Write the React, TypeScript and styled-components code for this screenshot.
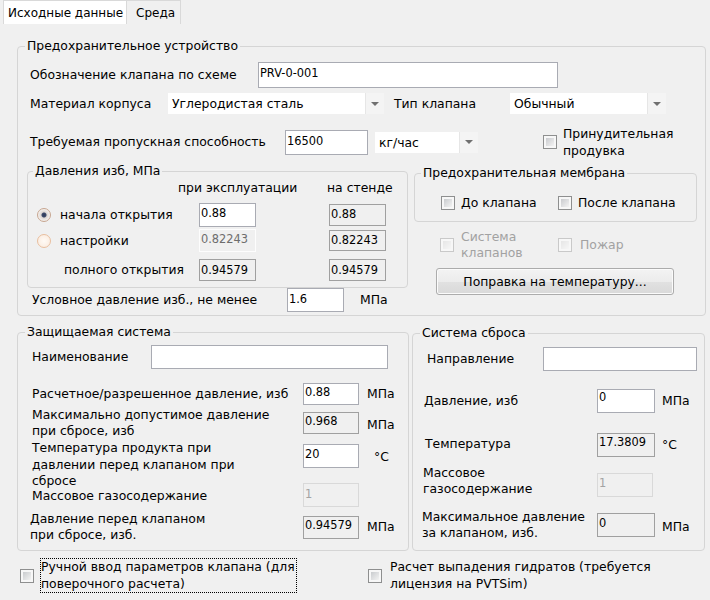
import React from 'react';
import styled, { createGlobalStyle, css } from 'styled-components';

const GlobalStyle = createGlobalStyle`
  html, body {
    margin: 0;
    padding: 0;
    background: #f0f0f0;
  }
`;

const Screen = styled.div`
  width: 710px;
  height: 600px;
  overflow: hidden;
  background: #f0f0f0;
  font-family: 'DejaVu Sans', Verdana, sans-serif;
  font-size: 12.4px;
  line-height: 16px;
  color: #000;
  display: flex;
  flex-direction: column;
`;

const TabStrip = styled.div`
  display: flex;
  height: 24px;
  padding-left: 3px;
  flex: none;
`;

const Tab = styled.div<{ $active?: boolean }>`
  box-sizing: border-box;
  height: 24px;
  font-size: 12px;
  line-height: 16px;
  padding: 4px 3px 0 4px;
  border: 1px solid #d9d9d9;
  border-bottom: none;
  background: #fff;
  white-space: nowrap;

  ${({ $active }) =>
    !$active &&
    css`
      background: #f0f0f0;
      border-left: none;
      padding: 4px 5px 0 9px;
    `}
`;

const Group = styled.fieldset<{ $w: number; $h: number; $mt?: number; $ml?: number }>`
  box-sizing: border-box;
  flex: none;
  width: ${({ $w }) => $w}px;
  height: ${({ $h }) => $h}px;
  margin: ${({ $mt }) => $mt ?? 0}px 0 0 ${({ $ml }) => $ml ?? 0}px;
  padding: 0;
  min-width: 0;
  border: 1px solid #d5d5d5;
  border-radius: 4px;
`;

const Legend = styled.legend<{ $ml: number }>`
  margin-left: ${({ $ml }) => $ml}px;
  padding: 0 2px;
  line-height: 16px;
  white-space: nowrap;
`;

const GroupBody = styled.div<{ $pl?: number }>`
  display: flex;
  flex-direction: column;
  padding-left: ${({ $pl }) => $pl ?? 0}px;
`;

const Split = styled.div<{ $mt?: number; $gap: number; $pl?: number }>`
  display: flex;
  align-items: flex-start;
  flex: none;
  gap: ${({ $gap }) => $gap}px;
  margin-top: ${({ $mt }) => $mt ?? 0}px;
  padding-left: ${({ $pl }) => $pl ?? 0}px;
`;

const Column = styled.div<{ $w: number }>`
  display: flex;
  flex-direction: column;
  flex: none;
  width: ${({ $w }) => $w}px;
`;

const Row = styled.div<{ $mt?: number; $h: number; $pl?: number; $top?: boolean }>`
  display: flex;
  flex: none;
  align-items: ${({ $top }) => ($top ? 'flex-start' : 'center')};
  height: ${({ $h }) => $h}px;
  margin-top: ${({ $mt }) => $mt ?? 0}px;
  padding-left: ${({ $pl }) => $pl ?? 0}px;
`;

const Label = styled.div<{ $w?: number; $ml?: number; $mt?: number; $lh?: number; $off?: boolean }>`
  flex: none;
  ${({ $w }) => $w !== undefined && css`width: ${$w}px;`}
  margin: ${({ $mt }) => $mt ?? 0}px 0 0 ${({ $ml }) => $ml ?? 0}px;
  line-height: ${({ $lh }) => $lh ?? 16}px;
  color: ${({ $off }) => ($off ? '#a2a2a2' : '#000')};
  white-space: nowrap;
`;

const Unit = styled(Label)``;

type FieldKind = 'edit' | 'readonly' | 'locked' | 'off';

const fieldKinds: Record<FieldKind, ReturnType<typeof css>> = {
  edit: css`
    background: #fff;
    border: 1px solid #a9abb3;
    color: #000;
  `,
  readonly: css`
    background: transparent;
    border: 1px solid #a0a0a0;
    color: #000;
  `,
  locked: css`
    background: #f0f0f0;
    border: 1px solid #fdfdfd;
    color: #6d6d6d;
  `,
  off: css`
    background: #f0f0f0;
    border: 1px solid #d9d9d9;
    color: #a3a3a3;
  `,
};

const Field = styled.div<{
  $w: number;
  $h: number;
  $kind?: FieldKind;
  $pt?: number;
  $mt?: number;
  $ml?: number;
}>`
  box-sizing: border-box;
  flex: none;
  width: ${({ $w }) => $w}px;
  height: ${({ $h }) => $h}px;
  margin: ${({ $mt }) => $mt ?? 0}px 0 0 ${({ $ml }) => $ml ?? 0}px;
  padding: ${({ $pt }) => $pt ?? 2}px 1px 0;
  font-size: 11.4px;
  line-height: 14px;
  white-space: nowrap;
  overflow: hidden;
  ${({ $kind }) => fieldKinds[$kind ?? 'edit']}
`;

const Combo = styled.div<{ $w: number; $ml?: number }>`
  box-sizing: border-box;
  flex: none;
  display: flex;
  width: ${({ $w }) => $w}px;
  height: 21px;
  margin-left: ${({ $ml }) => $ml ?? 0}px;
  background: #fff;
`;

const ComboText = styled.div`
  flex: 1;
  padding-left: 4px;
  line-height: 21px;
  white-space: nowrap;
  overflow: hidden;
`;

const ComboArrow = styled.div`
  width: 18px;
  flex: none;
  background: #f4f4f4;
  border-left: 1px solid #e6e6e6;
  display: flex;
  align-items: center;
  justify-content: center;

  &::after {
    content: '';
    border-left: 4px solid transparent;
    border-right: 4px solid transparent;
    border-top: 4px solid #707070;
  }
`;

const Check = styled.span<{ $off?: boolean; $ml?: number }>`
  box-sizing: border-box;
  flex: none;
  width: 14px;
  height: 14px;
  padding: 2px;
  margin-left: ${({ $ml }) => $ml ?? 0}px;
  border: 1px solid ${({ $off }) => ($off ? '#c9c9c9' : '#8e8f8f')};
  background: ${({ $off }) =>
    $off
      ? 'linear-gradient(135deg, #e6e6e6, #f6f6f6) content-box, #f7f7f7'
      : 'linear-gradient(135deg, #c9cbce, #f3f3f3) content-box, #f7f7f7'};
`;

const Radio = styled.span<{ $on?: boolean; $ml?: number }>`
  box-sizing: border-box;
  flex: none;
  width: 14px;
  height: 14px;
  margin-left: ${({ $ml }) => $ml ?? 0}px;
  border-radius: 50%;
  border: 1px solid ${({ $on }) => ($on ? '#c7a690' : '#e9bf9f')};
  background: ${({ $on }) =>
    $on
      ? 'radial-gradient(circle, #2f3b5a 0, #3d4a6a 2px, #dcd6d2 3px, #f6f2ef 6px)'
      : 'radial-gradient(circle, #fffaf5 0, #fbeee3 6px)'};
`;

const PushButton = styled.div`
  box-sizing: border-box;
  flex: none;
  width: 238px;
  height: 27px;
  margin: 7px 0 0 22px;
  border: 1px solid #acacac;
  border-radius: 3px;
  background: linear-gradient(#f3f3f3, #ececec 50%, #e1e1e1 51%, #d9d9d9);
  box-shadow: inset 0 0 0 1px #fbfbfb;
  display: flex;
  align-items: center;
  justify-content: center;
  white-space: nowrap;
`;

const FocusLabel = styled.div<{ $w: number; $ml: number }>`
  box-sizing: border-box;
  flex: none;
  width: ${({ $w }) => $w}px;
  height: 35px;
  margin-left: ${({ $ml }) => $ml}px;
  padding-left: 0;
  border: 1px dotted #000;
  line-height: 16.5px;
  white-space: nowrap;
`;

const App = () => (
  <>
    <GlobalStyle />
    <Screen>
      <TabStrip>
        <Tab $active>Исходные данные</Tab>
        <Tab>Среда</Tab>
      </TabStrip>

      <Group $w={689} $h={278} $mt={14} $ml={17}>
        <Legend $ml={7}>Предохранительное устройство</Legend>
        <GroupBody $pl={9}>
          <Row $mt={8} $h={26} $pl={3}>
            <Label $w={228}>Обозначение клапана по схеме</Label>
            <Field $w={300} $h={26} $pt={3}>
              PRV-0-001
            </Field>
          </Row>

          <Row $mt={5} $h={21} $pl={3}>
            <Label $w={138}>Материал корпуса</Label>
            <Combo $w={216}>
              <ComboText>Углеродистая сталь</ComboText>
              <ComboArrow />
            </Combo>
            <Label $w={116} $ml={10}>
              Тип клапана
            </Label>
            <Combo $w={156}>
              <ComboText>Обычный</ComboText>
              <ComboArrow />
            </Combo>
          </Row>

          <Row $mt={11} $h={34} $pl={3}>
            <Label $w={255}>Требуемая пропускная способность</Label>
            <Field $w={83} $h={25} $pt={3}>
              16500
            </Field>
            <Combo $w={103} $ml={7}>
              <ComboText>кг/час</ComboText>
              <ComboArrow />
            </Combo>
            <Check $ml={65} />
            <Label $ml={6} $lh={17}>
              Принудительная
              <br />
              продувка
            </Label>
          </Row>

          <Split $mt={4} $gap={6}>
            <Column $w={381}>
              <Group $w={381} $h={125}>
                <Legend $ml={5}>Давления изб, МПа</Legend>
                <GroupBody>
                  <Row $mt={1} $h={16}>
                    <Label $w={149} $ml={150}>
                      при эксплуатации
                    </Label>
                    <Label>на стенде</Label>
                  </Row>
                  <Row $mt={7} $h={24}>
                    <Radio $on $ml={9} />
                    <Label $w={139} $ml={9}>
                      начала открытия
                    </Label>
                    <Field $w={57} $h={24}>
                      0.88
                    </Field>
                    <Field $w={57} $h={22} $kind="readonly" $ml={73}>
                      0.88
                    </Field>
                  </Row>
                  <Row $mt={2} $h={23}>
                    <Radio $ml={9} />
                    <Label $w={139} $ml={9}>
                      настройки
                    </Label>
                    <Field $w={57} $h={23} $kind="locked">
                      0.82243
                    </Field>
                    <Field $w={57} $h={21} $kind="readonly" $ml={73}>
                      0.82243
                    </Field>
                  </Row>
                  <Row $mt={7} $h={22}>
                    <Label $w={135} $ml={36}>
                      полного открытия
                    </Label>
                    <Field $w={57} $h={22} $kind="readonly" $pt={3}>
                      0.94579
                    </Field>
                    <Field $w={57} $h={22} $kind="readonly" $ml={73} $pt={3}>
                      0.94579
                    </Field>
                  </Row>
                </GroupBody>
              </Group>
              <Row $h={24} $pl={5}>
                <Label $w={255}>Условное давление изб., не менее</Label>
                <Field $w={57} $h={24} $pt={3}>
                  1.6
                </Field>
                <Unit $ml={16}>МПа</Unit>
              </Row>
            </Column>

            <Column $w={283}>
              <Group $w={283} $h={57} $mt={2}>
                <Legend $ml={6}>Предохранительная мембрана</Legend>
                <GroupBody>
                  <Row $mt={14} $h={16}>
                    <Check $ml={26} />
                    <Label $w={97} $ml={6}>
                      До клапана
                    </Label>
                    <Check />
                    <Label $ml={6}>После клапана</Label>
                  </Row>
                </GroupBody>
              </Group>
              <Row $mt={7} $h={32}>
                <Check $off $ml={26} />
                <Label $w={97} $ml={7} $off>
                  Система
                  <br />
                  клапанов
                </Label>
                <Check $off />
                <Label $ml={8} $off>
                  Пожар
                </Label>
              </Row>
              <PushButton>Поправка на температуру...</PushButton>
            </Column>
          </Split>
        </GroupBody>
      </Group>

      <Split $mt={8} $gap={3} $pl={17}>
        <Group $w={392} $h={227}>
          <Legend $ml={7}>Защищаемая система</Legend>
          <GroupBody $pl={14}>
            <Row $mt={5} $h={24}>
              <Label $w={119}>Наименование</Label>
              <Field $w={237} $h={24} />
            </Row>
            <Row $mt={14} $h={22}>
              <Label $w={271}>Расчетное/разрешенное давление, изб</Label>
              <Field $w={56} $h={22} $pt={1}>
                0.88
              </Field>
              <Unit $ml={8}>МПа</Unit>
            </Row>
            <Row $mt={2} $h={32}>
              <Label $w={271}>
                Максимально допустимое давление
                <br />
                при сбросе, изб
              </Label>
              <Field $w={56} $h={22} $kind="readonly" $pt={1}>
                0.968
              </Field>
              <Unit $ml={8} $mt={4}>
                МПа
              </Unit>
            </Row>
            <Row $mt={1} $h={43} $top>
              <Label $w={271} $lh={16.5}>
                Температура продукта при
                <br />
                давлении перед клапаном при
                <br />
                сбросе
              </Label>
              <Field $w={56} $h={24} $mt={4}>
                20
              </Field>
              <Unit $ml={15} $mt={9}>
                °C
              </Unit>
            </Row>
            <Row $h={24}>
              <Label $w={271} $mt={2}>
                Массовое газосодержание
              </Label>
              <Field $w={56} $h={24} $kind="off" $pt={3}>
                1
              </Field>
            </Row>
            <Row $mt={4} $h={32}>
              <Label $w={273} $ml={-2}>
                Давление перед клапаном
                <br />
                при сбросе, изб.
              </Label>
              <Field $w={56} $h={23} $kind="readonly" $pt={1}>
                0.94579
              </Field>
              <Unit $ml={8}>МПа</Unit>
            </Row>
          </GroupBody>
        </Group>

        <Group $w={293} $h={226} $mt={1}>
          <Legend $ml={7}>Система сброса</Legend>
          <GroupBody $pl={11}>
            <Row $mt={6} $h={24}>
              <Label $w={116} $ml={3}>
                Направление
              </Label>
              <Field $w={154} $h={24} />
            </Row>
            <Row $mt={18} $h={24}>
              <Label $w={173}>Давление, изб</Label>
              <Field $w={58} $h={24} $pt={0}>
                0
              </Field>
              <Unit $ml={7}>МПа</Unit>
            </Row>
            <Row $mt={20} $h={24}>
              <Label $w={172} $ml={1} $mt={-3}>
                Температура
              </Label>
              <Field $w={58} $h={24} $kind="readonly" $pt={1}>
                17.3809
              </Field>
              <Unit $ml={7}>°C</Unit>
            </Row>
            <Row $mt={8} $h={32} $top>
              <Label $w={174} $ml={-1}>
                Массовое
                <br />
                газосодержание
              </Label>
              <Field $w={56} $h={24} $kind="off" $mt={8} $pt={2}>
                1
              </Field>
            </Row>
            <Row $mt={12} $h={32}>
              <Label $w={175} $ml={-2}>
                Максимальное давление
                <br />
                за клапаном, изб.
              </Label>
              <Field $w={58} $h={24} $kind="readonly" $pt={2}>
                0
              </Field>
              <Unit $ml={7} $mt={3}>
                МПа
              </Unit>
            </Row>
          </GroupBody>
        </Group>
      </Split>

      <Row $mt={7} $h={35} $pl={20}>
        <Check />
        <FocusLabel $w={257} $ml={6}>
          Ручной ввод параметров клапана (для
          <br />
          поверочного расчета)
        </FocusLabel>
        <Check $ml={71} />
        <Label $ml={8} $lh={16.5}>
          Расчет выпадения гидратов (требуется
          <br />
          лицензия на PVTSim)
        </Label>
      </Row>
    </Screen>
  </>
);

export default App;
